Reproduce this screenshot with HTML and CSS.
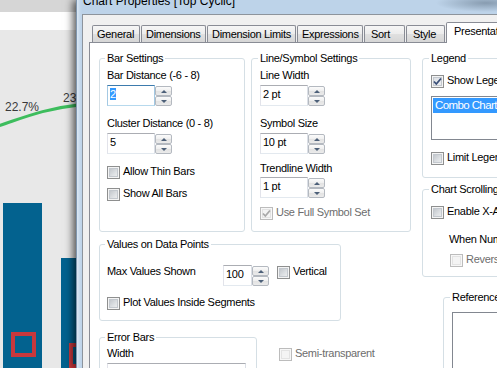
FILE: index.html
```html
<!DOCTYPE html>
<html>
<head>
<meta charset="utf-8">
<title>Chart Properties</title>
<link rel="stylesheet" href="styles.css">
</head>
<body>
<div class="chart">
  <svg width="76" height="368" viewBox="0 0 76 368">
    <rect x="0" y="0" width="76" height="12" fill="#d6d6d6"/>
    <rect x="0" y="12" width="76" height="18" fill="#ffffff"/>
    <rect x="0" y="30" width="76" height="338" fill="#e8e8e8"/>
    <path d="M-2 126 C 20 119, 45 108, 80 105" fill="none" stroke="#3dbd5d" stroke-width="3"/>
    <text x="5" y="111" class="chart-label">22.7%</text>
    <text x="63" y="101.5" class="chart-label">23</text>
    <rect x="3" y="203" width="39" height="165" fill="#03628f"/>
    <rect x="61" y="258" width="30" height="110" fill="#03628f"/>
    <rect x="13" y="334" width="21" height="21" fill="none" stroke="#c9383d" stroke-width="4"/>
    <rect x="71" y="345" width="21" height="21" fill="none" stroke="#c9383d" stroke-width="4"/>
  </svg>
</div>
<div class="dialog">
  <div class="titlebar"><span class="title">Chart Properties [Top Cyclic]</span></div>
  <div class="client">
    <div class="tabs">
      <div class="tab t-general">General</div>
      <div class="tab t-dims">Dimensions</div>
      <div class="tab t-limits">Dimension Limits</div>
      <div class="tab t-expr">Expressions</div>
      <div class="tab t-sort">Sort</div>
      <div class="tab t-style">Style</div>
      <div class="tab selected">Presentation</div>
    </div>
    <div class="panel">
      <div class="col-a">
        <div class="row-top">
          <div class="group g-bar">
            <div class="group-title">Bar Settings</div>
            <div class="label first">Bar Distance (-6 - 8)</div>
            <div class="spin">
              <div class="spin-field focused"><span class="sel">2</span></div>
              <div class="spin-btns"><div class="spin-btn up"></div><div class="spin-btn down"></div></div>
            </div>
            <div class="label next">Cluster Distance (0 - 8)</div>
            <div class="spin">
              <div class="spin-field">5</div>
              <div class="spin-btns"><div class="spin-btn up"></div><div class="spin-btn down"></div></div>
            </div>
            <div class="cb cb-thin"><span class="box"></span>Allow Thin Bars</div>
            <div class="cb cb-all"><span class="box"></span>Show All Bars</div>
          </div>
          <div class="group g-line">
            <div class="group-title">Line/Symbol Settings</div>
            <div class="label first">Line Width</div>
            <div class="spin">
              <div class="spin-field">2 pt</div>
              <div class="spin-btns"><div class="spin-btn up"></div><div class="spin-btn down"></div></div>
            </div>
            <div class="label next">Symbol Size</div>
            <div class="spin">
              <div class="spin-field">10 pt</div>
              <div class="spin-btns"><div class="spin-btn up"></div><div class="spin-btn down"></div></div>
            </div>
            <div class="label trend">Trendline Width</div>
            <div class="spin spin-trend">
              <div class="spin-field">1 pt</div>
              <div class="spin-btns"><div class="spin-btn up"></div><div class="spin-btn down"></div></div>
            </div>
            <div class="cb cb-full disabled"><span class="box"><svg width="11" height="11" viewBox="0 0 11 11"><path d="M2 5.5 L4.3 8 L9 2.5" fill="none" stroke="#a9a9a9" stroke-width="1.8"/></svg></span>Use Full Symbol Set</div>
          </div>
        </div>
        <div class="group g-values">
          <div class="group-title">Values on Data Points</div>
          <div class="values-row">
            <div class="label max-label">Max Values Shown</div>
            <div class="spin">
              <div class="spin-field narrow">100</div>
              <div class="spin-btns"><div class="spin-btn up"></div><div class="spin-btn down"></div></div>
            </div>
            <div class="cb cb-vertical"><span class="box"></span>Vertical</div>
          </div>
          <div class="cb cb-plot"><span class="box"></span>Plot Values Inside Segments</div>
        </div>
        <div class="row-bottom">
          <div class="group g-error">
            <div class="group-title">Error Bars</div>
            <div class="label width-label">Width</div>
            <div class="text-field"></div>
          </div>
          <div class="cb cb-semi disabled"><span class="box"></span>Semi-transparent</div>
        </div>
      </div>
      <div class="col-b">
        <div class="group g-legend">
          <div class="group-title">Legend</div>
          <div class="cb cb-show"><span class="box"><svg width="11" height="11" viewBox="0 0 11 11"><path d="M2 5.5 L4.3 8 L9 2.5" fill="none" stroke="#3a4f78" stroke-width="1.8"/></svg></span>Show Legend</div>
          <div class="listbox"><div class="list-item">Combo Chart</div></div>
          <div class="cb cb-limit"><span class="box"></span>Limit Legend</div>
        </div>
        <div class="group g-scroll">
          <div class="group-title">Chart Scrolling</div>
          <div class="cb cb-enable"><span class="box"></span>Enable X-Axis Scrollbar</div>
          <div class="label when">When Number of Items Exceeds:</div>
          <div class="cb cb-reverse disabled"><span class="box"></span>Reversed</div>
        </div>
        <div class="group g-ref">
          <div class="group-title">Reference Lines</div>
          <div class="ref-list"></div>
        </div>
      </div>
    </div>
  </div>
</div>
</body>
</html>
```

FILE: styles.css
```css
* { box-sizing: border-box; }
html, body { margin: 0; padding: 0; }
body {
  width: 497px;
  height: 368px;
  overflow: hidden;
  display: flex;
  font-family: "Liberation Sans", Arial, sans-serif;
  font-size: 11px;
  letter-spacing: -0.3px;
  color: #000;
  background: #e8e8e8;
}

.chart { width: 76px; flex: none; }
.chart svg { display: block; }
.chart-label { font: 12px "Liberation Sans", Arial, sans-serif; fill: #3a3a3a; letter-spacing: 0; }

.dialog {
  flex: none;
  width: 560px;
  height: 368px;
  display: flex;
  flex-direction: column;
  background: linear-gradient(to right, #7f96ae 0, #7f96ae 1px, #dce8f4 1px, #c4d8ec 4px, #bdd3e9 6px, #bdd3e9 100%);
  box-shadow: -3px 0 8px rgba(0, 0, 0, 0.65);
}

.titlebar {
  height: 14px;
  flex: none;
  padding-left: 7px;
  background: radial-gradient(ellipse 50px 9px at 410px 3px, rgba(70, 88, 106, 0.45), rgba(70, 88, 106, 0));
}
.title {
  display: block;
  margin-top: -7px;
  font-size: 12px;
  line-height: 16px;
  letter-spacing: 0;
  white-space: nowrap;
}

.client {
  flex: 1;
  margin-left: 6px;
  border-left: 1px solid #8d949c;
  border-top: 1px solid #8d949c;
  background: #f0f0f0;
  padding: 7px 0 0 6px;
  display: flex;
  flex-direction: column;
}

.tabs {
  display: flex;
  align-items: flex-end;
  height: 20px;
  flex: none;
  padding-left: 3px;
  gap: 1px;
  position: relative;
  z-index: 1;
}
.tab {
  height: 17px;
  border: 1px solid #898c95;
  border-bottom: none;
  border-radius: 2px 2px 0 0;
  padding: 2px 0 0 4px;
  line-height: 13px;
  white-space: nowrap;
  background: linear-gradient(#f6f6f6, #ececec 50%, #e0e0e0 51%, #d6d6d6);
}
.t-general { width: 48px; }
.t-dims { width: 65px; }
.t-limits { width: 89px; }
.t-expr { width: 66px; }
.t-sort { width: 41px; padding-left: 6px; }
.t-style { width: 39px; padding-left: 6px; }
.tab.selected {
  width: 120px;
  height: 21px;
  margin-bottom: -1px;
  background: #fff;
  padding-left: 7px;
}

.panel {
  flex: 1;
  border: 1px solid #898c95;
  background: #fff;
  padding: 15px 0 0 9px;
  display: flex;
  align-items: flex-start;
}

.col-a { width: 312px; flex: none; display: flex; flex-direction: column; }
.col-b { width: 170px; flex: none; margin-left: 11px; display: flex; flex-direction: column; align-items: flex-start; }

.row-top { display: flex; gap: 6px; }
.row-bottom { display: flex; align-items: flex-start; margin-top: 16px; }

.group {
  border: 1px solid #d5dfe5;
  border-radius: 3px;
  display: flex;
  flex-direction: column;
  align-items: flex-start;
  padding: 0 0 0 7px;
  flex: none;
}
.group-title {
  margin: -7px 0 0 -2px;
  padding: 0 2px;
  background: #fff;
  line-height: 13px;
  white-space: nowrap;
}

.g-bar { width: 146px; height: 174px; }
.g-line { width: 160px; height: 174px; padding-left: 8px; }
.g-values { width: 242px; height: 77px; margin-top: 12px; }
.g-error { width: 158px; height: 60px; }
.g-legend { width: 170px; height: 120px; padding-left: 8px; }
.g-scroll { width: 170px; height: 88px; margin-top: 11px; padding-left: 8px; }
.g-ref { width: 150px; height: 90px; margin-top: 20px; margin-left: 21px; padding-left: 8px; }

.label { line-height: 13px; white-space: nowrap; }
.label.first { margin-top: 4px; }
.label.next { margin-top: 11px; }
.label.trend { margin-top: 8px; }
.label.when { margin-top: 14px; margin-left: 18px; }
.label.width-label { margin-top: 3px; }
.max-label { width: 116px; flex: none; }

.spin { display: flex; height: 21px; margin-top: 3px; flex: none; }
.spin-field {
  width: 48px;
  height: 21px;
  border: 1px solid;
  border-color: #abadb3 #dbdfe6 #e3e9ef #e2e3ea;
  padding: 2px 0 0 2px;
  line-height: 13px;
  white-space: nowrap;
  background: #fff;
}
.spin-field.narrow { width: 29px; }
.spin-field.focused { border-color: #3d7bad #a4c9e3 #b7d9ed #a4c9e3; }
.sel { background: #3399ff; color: #fff; }
.spin-btns {
  width: 17px;
  height: 20px;
  margin-top: 1px;
  display: flex;
  flex-direction: column;
}
.spin-btn {
  height: 10px;
  border: 1px solid #b4b9c0;
  border-radius: 2px;
  background: linear-gradient(#fbfbfb, #efefef 50%, #e2e2e2 51%, #ebebeb);
  display: flex;
  align-items: center;
  justify-content: center;
}
.spin-btn.up::before {
  content: "";
  border-left: 3px solid transparent;
  border-right: 3px solid transparent;
  border-bottom: 3px solid #4d6079;
}
.spin-btn.down::before {
  content: "";
  border-left: 3px solid transparent;
  border-right: 3px solid transparent;
  border-top: 3px solid #4d6079;
}
.values-row { display: flex; align-items: flex-start; margin-top: 14px; }
.values-row .spin { margin-top: 0; }
.spin-trend { margin-top: 2px; }

.cb {
  display: flex;
  align-items: flex-start;
  line-height: 13px;
  white-space: nowrap;
}
.box {
  width: 13px;
  height: 13px;
  margin: 1px 3px 0 0;
  flex: none;
  border: 1px solid #8e8f8f;
  background: linear-gradient(135deg, #b7bcc2 0%, #dfe2e5 60%, #f3f3f3 100%);
  box-shadow: inset 0 0 0 1px #f4f4f4, inset 0 0 0 2px #c3c8ce;
  display: flex;
}
.box svg { display: block; }
.cb.disabled { color: #6d6d6d; }
.cb.disabled .box {
  border-color: #bcbcbc;
  background: #f4f4f4;
  box-shadow: inset 0 0 0 1px #f7f7f7, inset 0 0 0 2px #e3e3e3;
}
.cb-thin { margin-top: 11px; }
.cb-all { margin-top: 8px; }
.cb-full { margin-top: 8px; }
.cb-show { margin-top: 9px; }
.cb-show .box { background: linear-gradient(135deg, #d9dde2 0%, #f1f2f4 100%); }
.cb-limit { margin-top: 11px; }
.cb-enable { margin-top: 9px; }
.cb-reverse { margin-top: 7px; margin-left: 19px; }
.cb-vertical { margin-left: 8px; }
.cb-plot { margin-top: 10px; }
.cb-semi { margin: 10px 0 0 22px; }

.listbox {
  width: 90px;
  height: 44px;
  margin-top: 8px;
  border: 1px solid #828790;
  background: #fff;
  padding: 1px;
}
.list-item {
  height: 15px;
  line-height: 15px;
  padding-left: 2px;
  font-size: 11.5px;
  letter-spacing: -0.6px;
  background: #3399ff;
  color: #fff;
  white-space: nowrap;
}

.text-field {
  width: 139px;
  height: 21px;
  margin-top: 3px;
  border: 1px solid;
  border-color: #abadb3 #dbdfe6 #e3e9ef #e2e3ea;
  background: #fff;
}

.ref-list {
  width: 100px;
  height: 80px;
  margin-top: 8px;
  border: 1px solid #828790;
  background: #fff;
}
```
